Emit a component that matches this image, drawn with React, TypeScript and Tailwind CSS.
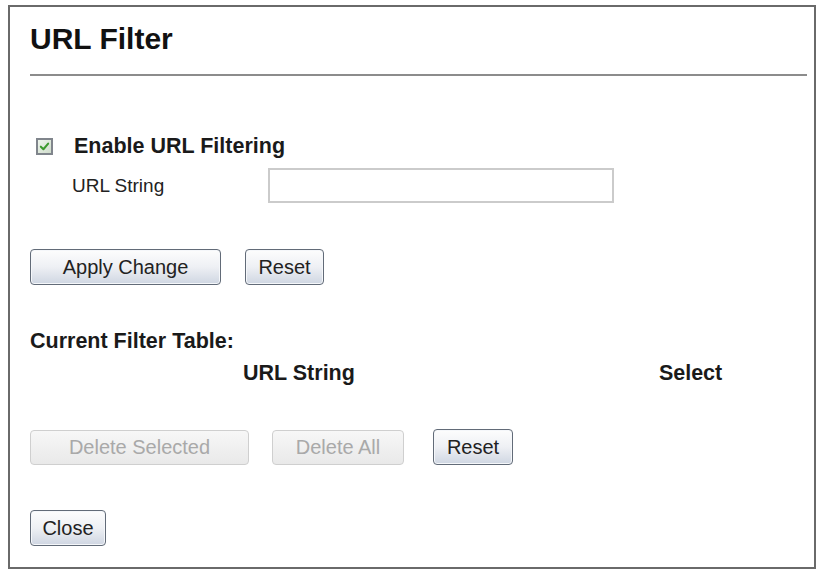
import { useState } from "react"

function Btn({ label, w, disabled }: { label: string; w: string; disabled?: boolean }) {
  if (disabled) {
    return (
      <button
        disabled
        className={`${w} h-[35px] rounded-[4px] border border-[#cfcfcf] bg-gradient-to-b from-[#f7f7f7] to-[#e9e9e9] text-[20px] leading-none text-[#a9a9a9]`}
      >
        {label}
      </button>
    )
  }
  return (
    <button
      className={`${w} h-[36px] rounded-[4px] border-[1.5px] border-[#626b78] bg-gradient-to-b from-[#fdfdfd] via-[#eef0f4] to-[#cfd6e2] text-[20px] leading-none text-[#222] shadow-[inset_0_0_0_1px_#f5f7fa]`}
    >
      {label}
    </button>
  )
}

export default function App() {
  const [enabled, setEnabled] = useState(true)

  return (
    <div className="w-[818px] h-[573px] bg-white pt-[5px] pl-[8px]" style={{ fontFamily: '"Liberation Sans", Arial, sans-serif' }}>
      <div className="w-[808px] h-[564px] border-2 border-[#6a6a6a] pl-[20px] pr-[7px]">
        {/* Title */}
        <h1 className="mt-[17px] h-[30px] text-[30px] leading-[30px] font-bold text-[#111]">URL Filter</h1>
        <div className="mt-[20px] h-[2px] bg-[#8c8c8c]" />

        {/* Enable */}
        <div className="mt-[58px] flex items-center h-[24px]">
          <button
            onClick={() => setEnabled(!enabled)}
            className="ml-[6px] w-[17px] h-[17px] border-2 border-[#80858c] bg-gradient-to-br from-[#eef5ec] to-[#cfdccb] flex items-center justify-center"
          >
            {enabled && (
              <svg viewBox="0 0 12 12" className="w-[11px] h-[11px]">
                <path d="M2 6.2 L4.8 9 L10 2.8" fill="none" stroke="#3c9a2e" strokeWidth="2.2" strokeLinecap="round" strokeLinejoin="round" />
              </svg>
            )}
          </button>
          <span className="ml-[21px] text-[21.5px] leading-[24px] font-bold text-[#1a1a1a]">Enable URL Filtering</span>
        </div>

        {/* URL string */}
        <div className="mt-[10px] flex items-center h-[35px]">
          <span className="ml-[42px] w-[196px] text-[19px] leading-none text-[#222]">URL String</span>
          <input className="w-[346px] h-[35px] border-2 border-[#cbcbcb] bg-white outline-none px-1 text-[18px]" />
        </div>

        {/* Apply */}
        <div className="mt-[46px] flex items-center gap-[24px]">
          <Btn label="Apply Change" w="w-[191px]" />
          <Btn label="Reset" w="w-[79px]" />
        </div>

        {/* Table */}
        <div className="mt-[44px] h-[24px] text-[21.5px] leading-[24px] font-bold text-[#1a1a1a]">Current Filter Table:</div>
        <div className="mt-[8px] flex h-[24px] text-[21.5px] leading-[24px] font-bold text-[#1a1a1a]">
          <span className="ml-[213px]">URL String</span>
          <span className="ml-[304px]">Select</span>
        </div>

        <div className="mt-[44px] flex items-center">
          <Btn label="Delete Selected" w="w-[219px]" disabled />
          <div className="ml-[23px]">
            <Btn label="Delete All" w="w-[132px]" disabled />
          </div>
          <div className="ml-[29px]">
            <Btn label="Reset" w="w-[80px]" />
          </div>
        </div>

        <div className="mt-[45px]">
          <Btn label="Close" w="w-[76px]" />
        </div>
      </div>
    </div>
  )
}
